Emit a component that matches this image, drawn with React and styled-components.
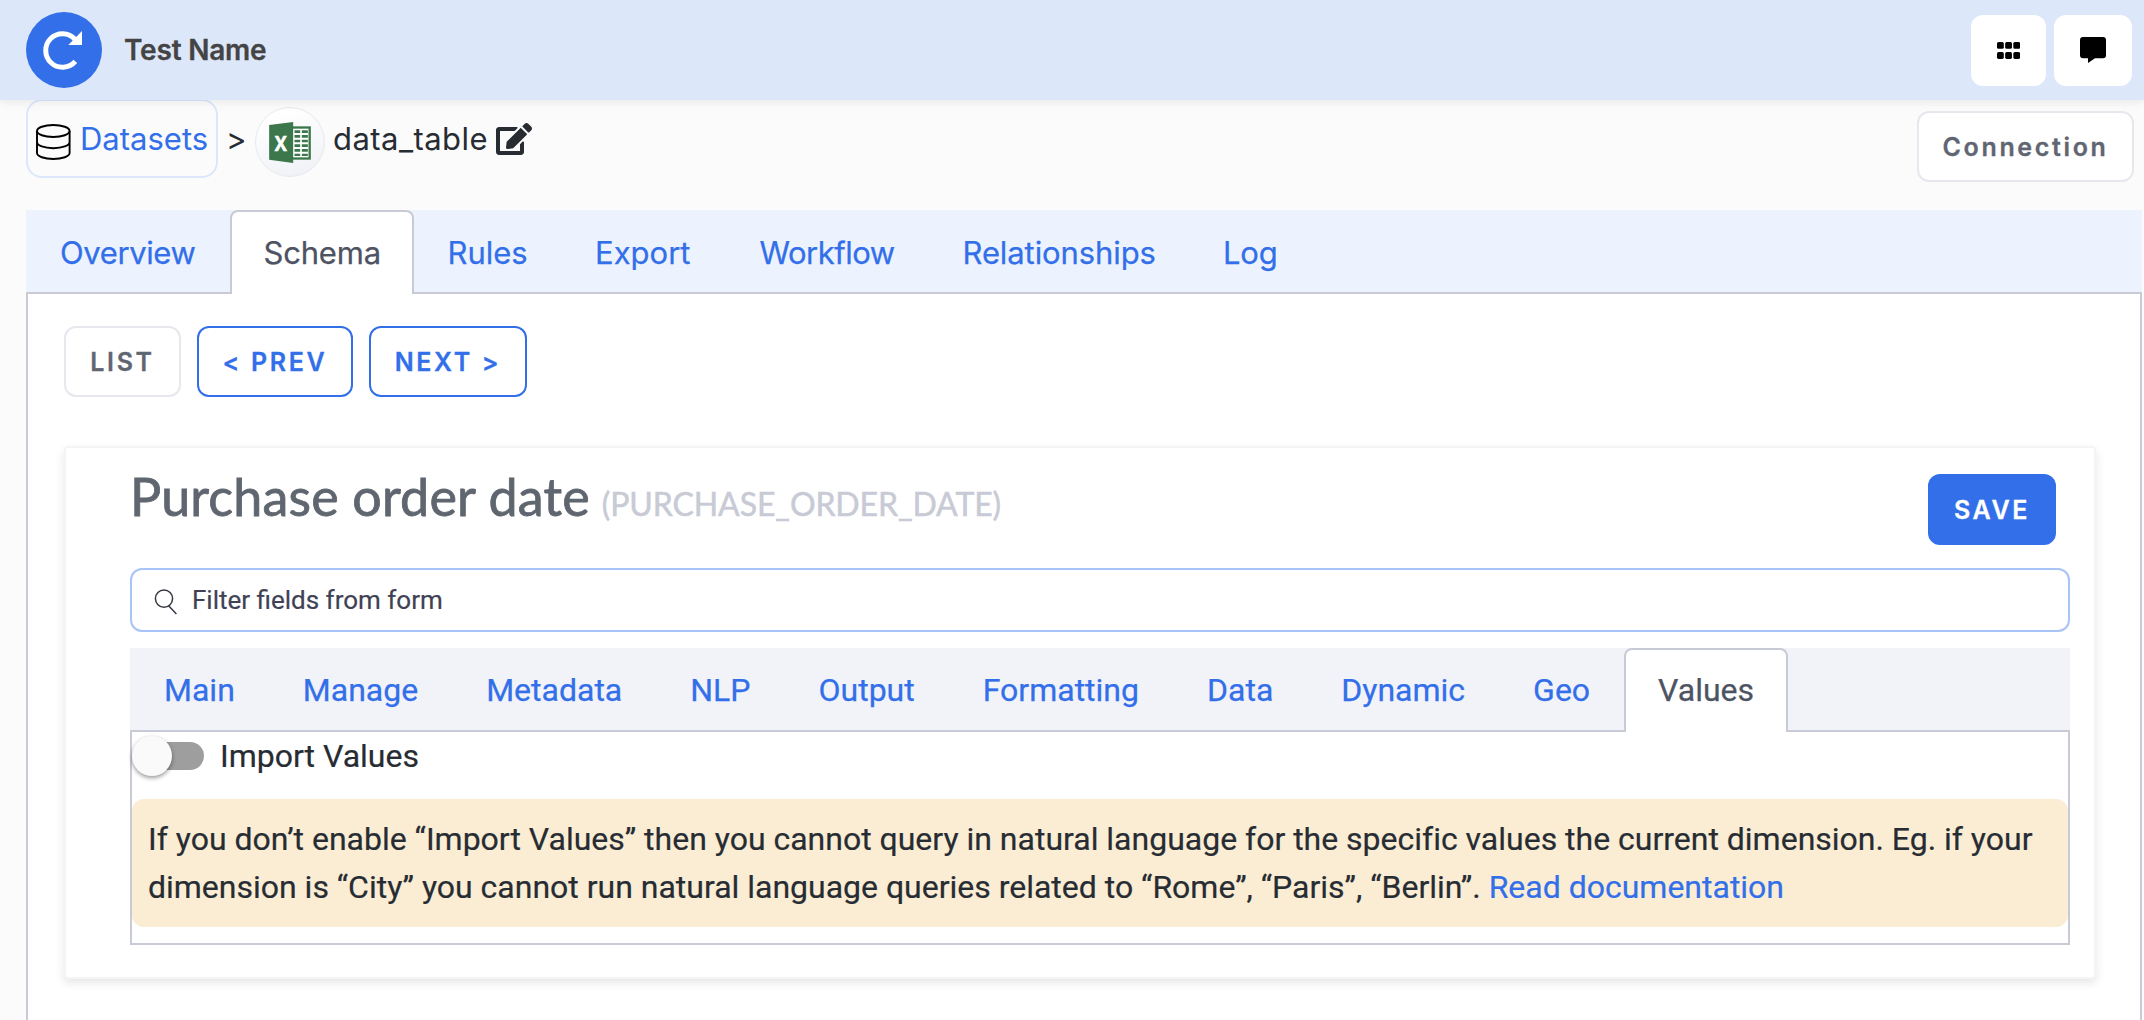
import React from "react";
import styled, { createGlobalStyle } from "styled-components";
import { FaEdit } from "react-icons/fa";

const ui = `Inter, "Liberation Sans", sans-serif`;
const body = `Roboto, "Liberation Sans", sans-serif`;
const blue = "#326fe9";
const line = "#c8cad5";

const GlobalStyle = createGlobalStyle`
  * { box-sizing: border-box; }
  body { margin: 0; background: #fbfbfb; font-family: ${body}; color: #272c33; }
  #root { height: 1020px; overflow: hidden; }
  svg { display: block; flex: none; }
`;

const Page = styled.div`
  display: flex;
  flex-direction: column;
  height: 1020px;
`;

const Header = styled.header`
  position: relative;
  z-index: 1;
  display: flex;
  align-items: center;
  flex: none;
  height: 100px;
  padding: 0 12px 0 26px;
  background: #dde7fa;
  box-shadow: 0 2px 10px rgba(0, 0, 0, 0.08);
`;

const Logo = styled.div`
  width: 76px;
  height: 76px;
  border-radius: 50%;
  background: ${blue};
`;

const AppName = styled.div`
  flex: 1;
  margin-left: 22px;
  font: 600 28px ${ui};
  letter-spacing: -0.2px;
  color: #444;
  -webkit-text-stroke: 0.3px currentColor;
`;

const HeaderButton = styled.button`
  display: flex;
  align-items: center;
  justify-content: center;
  width: ${(p) => p.$width}px;
  height: 71px;
  margin-left: 8px;
  padding: 0;
  border: 0;
  border-radius: 12px;
  background: #fff;
`;

const Breadcrumb = styled.nav`
  display: flex;
  align-items: center;
  flex: none;
  height: 79px;
  margin: -1px 10px 32px 26px;
  font: 400 31px ${ui};
`;

const DatasetsLink = styled.a`
  display: flex;
  align-items: center;
  gap: 9px;
  width: 192px;
  height: 79px;
  padding-left: 8px;
  border: 2px solid #dde7fc;
  border-radius: 16px;
  color: ${blue};
  svg { margin-top: 7px; }
`;

const Separator = styled.span`
  width: 29px;
  margin-left: 8px;
`;

const FileBadge = styled.div`
  display: flex;
  align-items: center;
  justify-content: center;
  width: 70px;
  height: 70px;
  margin-top: 7px;
  border: 1px solid #e8e9ed;
  border-radius: 50%;
  background: linear-gradient(160deg, #fff 15%, #eef0f6);
`;

const TableName = styled.span`
  width: 163px;
  margin-left: 8px;
  letter-spacing: 0.45px;
`;

const EditIcon = styled(FaEdit)`
  width: 36px;
  height: 32px;
`;

const tones = {
  muted: ["#fff", "#e7e8ee", "#5f6672"],
  outline: ["#fff", blue, blue],
  primary: [blue, blue, "#fff"],
};

const Button = styled.button`
  flex: none;
  width: ${(p) => p.$width}px;
  height: 71px;
  padding: 0;
  border: 2px solid ${(p) => tones[p.$tone][1]};
  border-radius: 12px;
  background: ${(p) => tones[p.$tone][0]};
  color: ${(p) => tones[p.$tone][2]};
  font: 600 25px ${ui};
  letter-spacing: 2.65px;
  white-space: nowrap;
  -webkit-text-stroke: 0.3px currentColor;
`;

const ConnectionButton = styled(Button)`
  align-self: flex-end;
  margin: 0 0 -4px auto;
`;

const TabStrip = styled.div`
  display: flex;
  flex: none;
  height: 84px;
  border-bottom: 2px solid ${line};
`;

const MainTabs = styled(TabStrip)`
  margin: 0 2px 0 26px;
  background: #edf3fe;
  font: 400 31px/50px ${ui};
`;

const FieldTabs = styled(TabStrip)`
  margin-top: 16px;
  background: #f2f3f8;
  font: 400 32px/48px ${body};
`;

const Tab = styled.a`
  height: 84px;
  width: ${(p) => (p.$width ? `${p.$width}px` : "auto")};
  padding: 16px 32px;
  border: 2px solid ${(p) => (p.$active ? line : "transparent")};
  border-bottom: 0;
  border-radius: 8px 8px 0 0;
  background: ${(p) => (p.$active ? "#fff" : "transparent")};
  color: ${(p) => (p.$active ? "#4e5363" : blue)};
  letter-spacing: ${(p) => p.$tracking || 0}px;
  white-space: nowrap;
  -webkit-text-stroke: 0.25px currentColor;
`;

const Content = styled.main`
  flex: 1;
  margin: 0 2px 0 26px;
  padding: 32px 44px 0 36px;
  border: solid ${line};
  border-width: 0 2px;
  background: #fff;
`;

const Actions = styled.div`
  display: flex;
  gap: 16px;
`;

const Card = styled.section`
  height: 533px;
  margin-top: 49px;
  padding: 26px 24px 0 64px;
  border: 2px solid #f4f4f5;
  border-radius: 4px;
  background: #fff;
  box-shadow: 0 4px 10px rgba(0, 0, 0, 0.1);
`;

const CardHeader = styled.div`
  display: flex;
  justify-content: space-between;
  height: 94px;
  padding-right: 14px;
`;

const Title = styled.h1`
  margin: -9px 0 0;
  font: 400 52px/62px Lato, sans-serif;
  letter-spacing: 0.17px;
  color: #5f666f;
  -webkit-text-stroke: 0.8px currentColor;
`;

const FieldCode = styled.small`
  margin-left: 12px;
  font-size: 32px;
  letter-spacing: -0.1px;
  color: ${line};
  -webkit-text-stroke: 0.5px currentColor;
`;

const Search = styled.div`
  display: flex;
  align-items: center;
  gap: 14px;
  height: 64px;
  padding-left: 22px;
  border: 2px solid #a8c4f7;
  border-radius: 12px;
  font: 400 26px ${body};
  color: #3f4254;
  -webkit-text-stroke: 0.2px currentColor;
  svg { margin-top: 3px; }
`;

const Panel = styled.div`
  height: 213px;
  border: 2px solid ${line};
  border-top: 0;
`;

const ToggleRow = styled.label`
  display: flex;
  align-items: center;
  gap: 16px;
  height: 48px;
  font-size: 32px;
  -webkit-text-stroke: 0.2px currentColor;
`;

const Track = styled.span`
  display: flex;
  align-items: center;
  width: 68px;
  height: 28px;
  margin-left: 4px;
  border-radius: 14px;
  background: #9e9e9e;
`;

const Knob = styled.span`
  width: 40px;
  height: 40px;
  margin-left: -4px;
  border-radius: 50%;
  background: #fafafa;
  box-shadow: 0 2px 4px rgba(0, 0, 0, 0.4);
`;

const Notice = styled.p`
  height: 128px;
  margin: 19px 0 0;
  padding: 16px;
  border-radius: 12px;
  background: #faedd4;
  font-size: 32px;
  line-height: 48px;
  letter-spacing: -0.008px;
  -webkit-text-stroke: 0.2px currentColor;
`;

const DocLink = styled.a`
  color: ${blue};
`;

const LogoMark = () => (
  <svg width="76" height="76" viewBox="0 0 76 76">
    <path d="M49 27.2A16.8 16.8 0 1 0 49.3 49.4" fill="none" stroke="#fff" strokeWidth="5" />
    <path d="M56 19v14H42.3z" fill="#fff" />
  </svg>
);

const GridIcon = () => (
  <svg width="23" height="17" viewBox="0 0 23 17">
    {[0, 8.15, 16.3].map((x) =>
      [0, 10.1].map((y) => (
        <rect key={`${x}-${y}`} x={x} y={y} width="6.8" height="6.8" rx="1.6" />
      ))
    )}
  </svg>
);

const ChatIcon = () => (
  <svg width="26" height="26" viewBox="0 0 26 26">
    <path d="M3 0h20a3 3 0 0 1 3 3v15.3a3 3 0 0 1-3 3h-8L8 26v-4.7H3a3 3 0 0 1-3-3V3a3 3 0 0 1 3-3z" />
  </svg>
);

const DatabaseIcon = () => (
  <svg width="35" height="36" viewBox="0 0 35 36" fill="none" stroke="#000" strokeWidth="1.9">
    <ellipse cx="17.3" cy="7" rx="16.3" ry="6" />
    <path d="M1 7v22c0 3.3 7.3 6 16.3 6s16.3-2.7 16.3-6V7M1 18c0 3.6 7.3 6.2 16.3 6.2s16.3-2.6 16.3-6.2" />
  </svg>
);

const ExcelIcon = () => (
  <svg width="42" height="41" viewBox="0 0 125 123">
    <path d="M70 13h55v100H70z" fill="#3b774a" />
    <path d="M70 20h48v86H70z" fill="#fff" />
    <path
      d="M76 25h17v8H76zM98 25h18v8H98zM76 39h17v8H76zM98 39h18v8H98zM76 53h17v8H76zM98 53h18v8H98zM76 67h17v8H76zM98 67h18v8H98zM76 81h17v8H76zM98 81h18v8H98zM76 95h17v7H76zM98 95h18v7H98z"
      fill="#3b774a"
    />
    <path d="M0 9L72 0v123L0 113z" fill="#3b774a" />
    <text x="35" y="86" textAnchor="middle" fill="#fff" stroke="#fff" strokeWidth="2" fontSize="66" fontWeight="700" fontFamily="Open Sans, sans-serif" textLength="36" lengthAdjust="spacingAndGlyphs">
      X
    </text>
  </svg>
);

const SearchIcon = () => (
  <svg width="24" height="26" viewBox="0 0 24 26" fill="none" stroke="#33373f" strokeWidth="1.5">
    <circle cx="10" cy="9.6" r="8.6" />
    <path d="M14.6 16.8L22.4 25" />
  </svg>
);

const mainTabs = [
  { label: "Overview", width: 203.5, tracking: -0.4 },
  { label: "Schema", width: 184, tracking: -0.2, active: true },
  { label: "Rules", width: 147.5 },
  { label: "Export", width: 164.5 },
  { label: "Workflow", width: 203, tracking: -0.5 },
  { label: "Relationships", width: 260.5, tracking: -0.1 },
  { label: "Log", width: 120, tracking: -0.2 },
];

const fieldTabs = ["Main", "Manage", "Metadata", "NLP", "Output", "Formatting", "Data", "Dynamic", "Geo", "Values"];

export default function App() {
  return (
    <Page>
      <GlobalStyle />
      <Header>
        <Logo><LogoMark /></Logo>
        <AppName>Test Name</AppName>
        <HeaderButton $width={75}><GridIcon /></HeaderButton>
        <HeaderButton $width={78}><ChatIcon /></HeaderButton>
      </Header>
      <Breadcrumb>
        <DatasetsLink><DatabaseIcon />Datasets</DatasetsLink>
        <Separator>&gt;</Separator>
        <FileBadge><ExcelIcon /></FileBadge>
        <TableName>data_table</TableName>
        <EditIcon />
        <ConnectionButton $width={217} $tone="muted">Connection</ConnectionButton>
      </Breadcrumb>
      <MainTabs>
        {mainTabs.map((t) => (
          <Tab key={t.label} $width={t.width} $tracking={t.tracking} $active={t.active}>{t.label}</Tab>
        ))}
      </MainTabs>
      <Content>
        <Actions>
          <Button $width={117} $tone="muted">LIST</Button>
          <Button $width={156} $tone="outline">&lt; PREV</Button>
          <Button $width={158} $tone="outline">NEXT &gt;</Button>
        </Actions>
        <Card>
          <CardHeader>
            <Title>Purchase order date<FieldCode>(PURCHASE_ORDER_DATE)</FieldCode></Title>
            <Button $width={128} $tone="primary">SAVE</Button>
          </CardHeader>
          <Search><SearchIcon />Filter fields from form</Search>
          <FieldTabs>
            {fieldTabs.map((label) => (
              <Tab key={label} $active={label === "Values"}>{label}</Tab>
            ))}
          </FieldTabs>
          <Panel>
            <ToggleRow><Track><Knob /></Track>Import Values</ToggleRow>
            <Notice>
              If you don’t enable “Import Values” then you cannot query in natural language for the specific values the
              current dimension. Eg. if your dimension is “City” you cannot run natural language queries related to
              “Rome”, “Paris”, “Berlin”. <DocLink>Read documentation</DocLink>
            </Notice>
          </Panel>
        </Card>
      </Content>
    </Page>
  );
}
